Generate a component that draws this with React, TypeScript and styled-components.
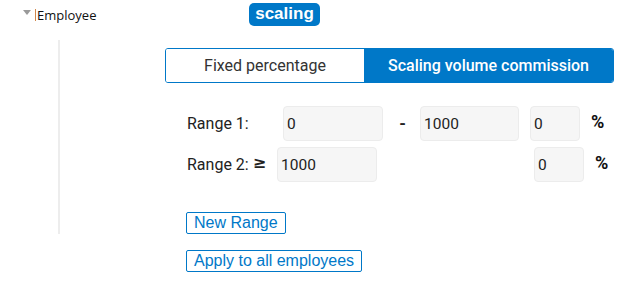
import React from "react";
import styled, { createGlobalStyle } from "styled-components";

const Global = createGlobalStyle`
  html, body { margin: 0; padding: 0; background: #fff; }
  body { font-family: Roboto, "Liberation Sans", sans-serif; color: #222; }
  * { box-sizing: border-box; }
`;

const BLUE = "#0078c8";

const Page = styled.div`
  width: 626px;
  height: 283px;
  padding-top: 3px;
  overflow: hidden;
`;

const Header = styled.div`
  display: flex;
  align-items: center;
  height: 23px;
  padding-left: 23px;
`;

const Arrow = styled.span`
  width: 0;
  height: 0;
  border-left: 4.5px solid transparent;
  border-right: 4.5px solid transparent;
  border-top: 5px solid #9a9a9a;
  margin-top: -4px;
`;

const Caret = styled.span`
  width: 1px;
  height: 12px;
  background: #d2874a;
  margin-left: 4px;
`;

const NodeLabel = styled.span`
  width: 213px;
  padding-left: 1px;
  font-family: "Open Sans", "Noto Sans", sans-serif;
  font-size: 13px;
  color: #111;
  line-height: 16px;
`;

const Badge = styled.span`
  display: inline-flex;
  align-items: center;
  justify-content: center;
  width: 71px;
  height: 23px;
  border-radius: 5px;
  background: ${BLUE};
  color: #fff;
  font-family: "Liberation Sans", Arial, sans-serif;
  font-weight: bold;
  font-size: 17px;
  padding-bottom: 1px;
`;

const Branch = styled.div`
  margin: 14px 0 0 58px;
  border-left: 2px solid #ededed;
  padding: 8px 0 0 105px;
`;

const Toggle = styled.div`
  display: flex;
  width: 449px;
  height: 35px;
  border: 1px solid ${BLUE};
  border-radius: 3px;
  overflow: hidden;
`;

const ToggleOption = styled.div<{ $active?: boolean; $w: number }>`
  width: ${(p) => p.$w}px;
  display: flex;
  align-items: center;
  justify-content: center;
  font-size: 16px;
  background: ${(p) => (p.$active ? BLUE : "#fff")};
  color: ${(p) => (p.$active ? "#fff" : "#333")};
  font-weight: ${(p) => (p.$active ? 500 : 400)};
`;

const Ranges = styled.div`
  display: flex;
  flex-direction: column;
  gap: 6px;
  margin-top: 23px;
  padding-left: 22px;
`;

const RangeRow = styled.div`
  display: flex;
  align-items: center;
  height: 35px;
`;

const RangeLabel = styled.span<{ $w: number }>`
  display: flex;
  align-items: center;
  width: ${(p) => p.$w}px;
  font-size: 16px;
  color: #222;
`;

const GreaterEq = styled.span`
  margin-left: 4px;
  font-family: "DejaVu Sans", sans-serif;
  font-size: 16px;
  font-weight: bold;
  color: #222;
  padding-bottom: 5px;
`;

const NumInput = styled.input<{ $w: number; $ml?: number }>`
  width: ${(p) => p.$w}px;
  height: 35px;
  margin-left: ${(p) => p.$ml ?? 0}px;
  background: #f6f6f6;
  border: 1px solid #ececec;
  border-radius: 4px;
  padding: 0 0 0 3px;
  font-family: Roboto, sans-serif;
  font-size: 15.5px;
  color: #222;
  outline: none;
`;

const Dash = styled.span`
  width: 37px;
  text-align: center;
  font-weight: bold;
  font-size: 17px;
  padding-left: 2px;
  padding-bottom: 2px;
`;

const Percent = styled.span<{ $ml: number }>`
  margin-left: ${(p) => p.$ml}px;
  font-weight: bold;
  font-size: 18px;
  color: #111;
  padding-bottom: 4px;
`;

const OutlineButton = styled.button<{ $mt: number }>`
  display: block;
  margin-top: ${(p) => p.$mt}px;
  height: 22px;
  padding: 0 7px;
  border: 1px solid ${BLUE};
  border-radius: 2px;
  background: #fff;
  color: ${BLUE};
  font-family: "Liberation Sans", Arial, sans-serif;
  font-size: 16px;
  line-height: 18px;
`;

const NewRangeWrap = styled.div`
  padding-left: 21px;
`;

const ApplyWrap = styled.div`
  padding-left: 186px;
`;

export default function App() {
  return (
    <Page>
      <Global />
      <Header>
        <Arrow />
        <Caret />
        <NodeLabel>Employee</NodeLabel>
        <Badge>scaling</Badge>
      </Header>
      <Branch>
        <Toggle>
          <ToggleOption $w={198}>Fixed percentage</ToggleOption>
          <ToggleOption $w={249} $active>
            Scaling volume commission
          </ToggleOption>
        </Toggle>
        <Ranges>
          <RangeRow>
            <RangeLabel $w={96}>Range 1:</RangeLabel>
            <NumInput $w={100} defaultValue="0" />
            <Dash>-</Dash>
            <NumInput $w={99} defaultValue="1000" />
            <NumInput $w={50} $ml={11} defaultValue="0" />
            <Percent $ml={11}>%</Percent>
          </RangeRow>
          <RangeRow>
            <RangeLabel $w={90}>
              Range 2:<GreaterEq>≥</GreaterEq>
            </RangeLabel>
            <NumInput $w={100} defaultValue="1000" />
            <NumInput $w={50} $ml={157} defaultValue="0" />
            <Percent $ml={11}>%</Percent>
          </RangeRow>
        </Ranges>
        <NewRangeWrap>
          <OutlineButton $mt={30}>New Range</OutlineButton>
        </NewRangeWrap>
      </Branch>
      <ApplyWrap>
        <OutlineButton $mt={16}>Apply to all employees</OutlineButton>
      </ApplyWrap>
    </Page>
  );
}
